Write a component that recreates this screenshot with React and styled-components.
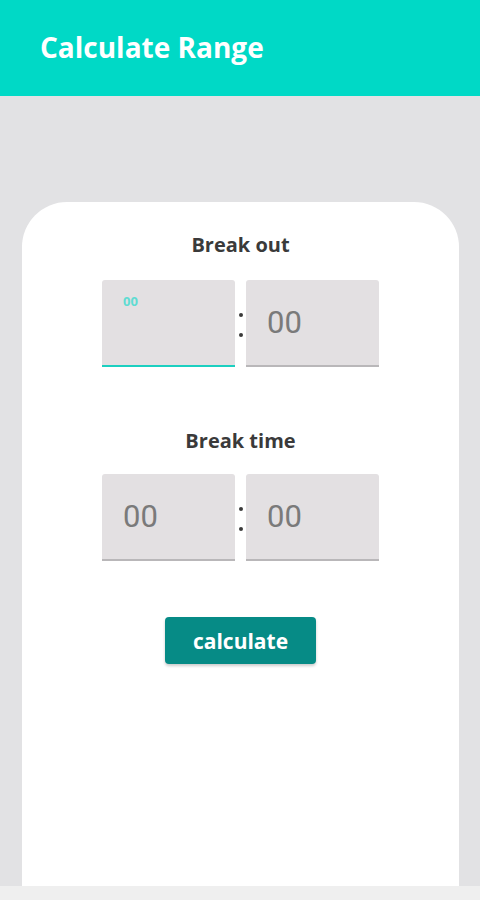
import React, { useState } from "react";
import styled, { createGlobalStyle } from "styled-components";

const GlobalStyle = createGlobalStyle`
  html, body {
    margin: 0;
    padding: 0;
  }
  body {
    font-family: "Open Sans", "Noto Sans", sans-serif;
    background: #e2e2e4;
  }
`;

const Page = styled.div`
  display: flex;
  flex-direction: column;
  width: 480px;
  height: 900px;
  overflow: hidden;
`;

const Header = styled.header`
  display: flex;
  align-items: center;
  height: 96px;
  padding: 0 40px;
  background: #00d9c6;
  box-sizing: border-box;
`;

const Title = styled.h1`
  margin: 0 0 2px;
  font-size: 28px;
  font-weight: 700;
  color: #ffffff;
`;

const Body = styled.main`
  display: flex;
  flex: 1;
  padding: 106px 21px 0 22px;
  background: #e2e2e4;
`;

const Card = styled.section`
  display: flex;
  flex-direction: column;
  align-items: center;
  flex: 1;
  padding-top: 29px;
  background: #ffffff;
  border-radius: 45px 45px 0 0;
`;

const Label = styled.div`
  font-size: 20px;
  font-weight: 700;
  line-height: 28px;
  color: #3a3a3a;
  margin-top: ${(p) => p.$top || 0}px;
`;

const TimeRow = styled.div`
  display: flex;
  align-items: center;
  gap: 3px;
  margin-top: ${(p) => p.$top}px;
`;

const Field = styled.div`
  position: relative;
  display: flex;
  align-items: center;
  width: 133px;
  height: 87px;
  padding-left: 21px;
  box-sizing: border-box;
  background: #e3e0e2;
  border-radius: 3px 3px 0 0;
  border-bottom: 2px solid ${(p) => (p.$active ? "#1ccfc0" : "#b9b7b9")};
`;

const Placeholder = styled.span`
  font-family: Roboto, "Noto Sans", sans-serif;
  font-size: 31px;
  color: #7a7a7a;
`;

const FloatLabel = styled.span`
  position: absolute;
  left: 21px;
  top: 12px;
  font-size: 13px;
  font-weight: 700;
  color: #5fdcd2;
`;

const Colon = styled.div`
  display: flex;
  flex-direction: column;
  gap: 16px;
  width: 5px;
  align-items: center;
  margin-top: 2px;
`;

const Dot = styled.span`
  width: 4px;
  height: 4px;
  border-radius: 50%;
  background: #3a3a3a;
`;

const CalcButton = styled.button`
  margin-top: 56px;
  width: 151px;
  height: 47px;
  border: none;
  border-radius: 4px;
  background: #068b86;
  color: #ffffff;
  font-family: "Open Sans", sans-serif;
  font-size: 21px;
  font-weight: 700;
  box-shadow: 0 2px 3px rgba(0, 0, 0, 0.2);
  cursor: pointer;
`;

const Footer = styled.div`
  height: 14px;
  background: #efefef;
`;

const TimeInput = ({ active }) => (
  <Field $active={active}>
    {active ? <FloatLabel>00</FloatLabel> : <Placeholder>00</Placeholder>}
  </Field>
);

const TimePair = ({ focusFirst, top }) => (
  <TimeRow $top={top}>
    <TimeInput active={focusFirst} />
    <Colon>
      <Dot />
      <Dot />
    </Colon>
    <TimeInput />
  </TimeRow>
);

const App = () => {
  const [result, setResult] = useState(null);

  return (
    <Page>
      <GlobalStyle />
      <Header>
        <Title>Calculate Range</Title>
      </Header>
      <Body>
        <Card>
          <Label>Break out</Label>
          <TimePair focusFirst top={21} />
          <Label $top={60}>Break time</Label>
          <TimePair top={19} />
          <CalcButton onClick={() => setResult(!result)}>calculate</CalcButton>
        </Card>
      </Body>
      <Footer />
    </Page>
  );
};

export default App;
